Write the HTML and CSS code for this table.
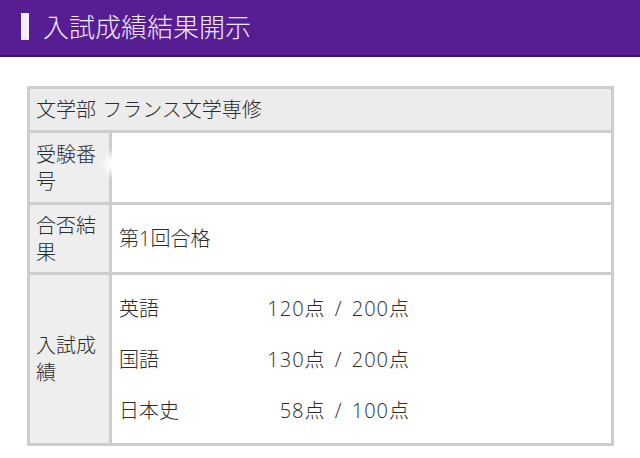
FILE: index.html
```html
<!DOCTYPE html>
<html lang="ja">
<head>
<meta charset="utf-8">
<title>入試成績結果開示</title>
<link rel="stylesheet" href="styles.css">
</head>
<body>
<header class="page-header">
  <span class="marker"></span>
  <h1 class="title">入試成績結果開示</h1>
</header>
<main class="content">
  <div class="result">
    <div class="cell cell-head">文学部 フランス文学専修</div>
    <div class="cell cell-label">受験番号</div>
    <div class="cell cell-value cell-masked"><span class="mask"></span></div>
    <div class="cell cell-label">合否結果</div>
    <div class="cell cell-value">第1回合格</div>
    <div class="cell cell-label">入試成績</div>
    <div class="cell cell-value">
      <div class="scores">
        <span class="subject">英語</span><span class="score">120点 / 200点</span>
        <span class="subject">国語</span><span class="score">130点 / 200点</span>
        <span class="subject">日本史</span><span class="score">58点 / 100点</span>
      </div>
    </div>
  </div>
</main>
</body>
</html>
```

FILE: styles.css
```css
* { box-sizing: border-box; }
html, body {
  margin: 0;
  padding: 0;
  background: #ffffff;
  font-family: "Noto Sans CJK JP", "Noto Sans", sans-serif;
  color: #2b2b2b;
}
.page-header {
  height: 57px;
  background: #571d92;
  border-bottom: 2px solid #3e136e;
  display: flex;
  align-items: center;
  padding-left: 21px;
}
.marker {
  width: 8px;
  height: 27px;
  background: #f4f0f8;
  margin-top: -2px;
}
.title {
  margin: -3px 0 0 14px;
  font-size: 26px;
  font-weight: 300;
  color: #f1ebf7;
  line-height: 1;
}
.content {
  padding: 29px 26px 0 27px;
}
.result {
  display: grid;
  grid-template-columns: 79px 1fr;
  grid-template-rows: 41px 69px 67px 168px;
  gap: 3px;
  background: #cdcdcd;
  border: 3px solid #cdcdcd;
}
.cell {
  font-family: "Open Sans", "Noto Sans CJK JP", sans-serif;
  font-size: 20px;
  font-weight: 300;
  line-height: 27px;
  display: flex;
  align-items: center;
}
.cell-head {
  grid-column: 1 / 3;
  background: #ececec;
  padding-left: 6px;
  word-spacing: 1px;
}
.cell-label {
  background: #eeeeee;
  padding: 0 5px 0 6px;
  word-break: break-all;
}
.cell-value {
  background: #ffffff;
  padding-left: 7px;
}
.cell-masked { position: relative; }
.mask {
  position: absolute;
  left: -8px;
  top: 14px;
  width: 70px;
  height: 34px;
  border-radius: 50%;
  background: #ffffff;
  filter: blur(3px);
}
.scores {
  display: grid;
  grid-template-columns: 120px 171px;
  grid-auto-rows: 51px;
  align-items: center;
}
.score {
  text-align: right;
  letter-spacing: 1px;
  word-spacing: 3px;
}
```
